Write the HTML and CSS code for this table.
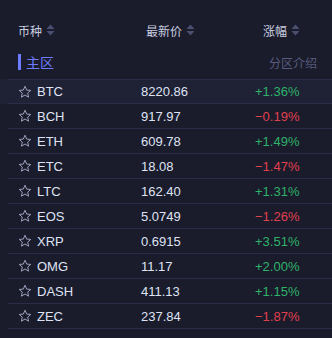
FILE: index.html
```html
<!DOCTYPE html>
<html lang="zh-CN">

<head>
    <meta charset="UTF-8">
    <meta name="viewport" content="width=device-width, initial-scale=1.0">
    <title>行情</title>
    <link rel="stylesheet" href="styles.css">
</head>

<body>
    <div class="market">
        <div class="market-head">
            <div class="col col-name">币种 <svg class="sort" viewBox="0 0 9 12"><path d="M4.5 0.5L8.5 5H0.5Z" /><path d="M4.5 11.5L8.5 7H0.5Z" /></svg></div>
            <div class="col col-price">最新价 <svg class="sort" viewBox="0 0 9 12"><path d="M4.5 0.5L8.5 5H0.5Z" /><path d="M4.5 11.5L8.5 7H0.5Z" /></svg></div>
            <div class="col col-change">涨幅 <svg class="sort" viewBox="0 0 9 12"><path d="M4.5 0.5L8.5 5H0.5Z" /><path d="M4.5 11.5L8.5 7H0.5Z" /></svg></div>
        </div>
        <div class="zone">
            <span class="zone-title">主区</span>
            <a href="javascript:" class="zone-intro">分区介绍</a>
        </div>
        <ul class="list">
            <li class="row active"><div class="row-in"><span class="col col-name"><svg class="star" viewBox="0 0 14 14"><path d="M7 1.2L8.7 5.1L12.8 5.4L9.7 8.1L10.6 12.2L7 10L3.4 12.2L4.3 8.1L1.2 5.4L5.3 5.1Z" /></svg>BTC</span><span class="col col-price">8220.86</span><span class="col col-change up">+1.36%</span></div></li>
            <li class="row"><div class="row-in"><span class="col col-name"><svg class="star" viewBox="0 0 14 14"><path d="M7 1.2L8.7 5.1L12.8 5.4L9.7 8.1L10.6 12.2L7 10L3.4 12.2L4.3 8.1L1.2 5.4L5.3 5.1Z" /></svg>BCH</span><span class="col col-price">917.97</span><span class="col col-change down">&minus;0.19%</span></div></li>
            <li class="row"><div class="row-in"><span class="col col-name"><svg class="star" viewBox="0 0 14 14"><path d="M7 1.2L8.7 5.1L12.8 5.4L9.7 8.1L10.6 12.2L7 10L3.4 12.2L4.3 8.1L1.2 5.4L5.3 5.1Z" /></svg>ETH</span><span class="col col-price">609.78</span><span class="col col-change up">+1.49%</span></div></li>
            <li class="row"><div class="row-in"><span class="col col-name"><svg class="star" viewBox="0 0 14 14"><path d="M7 1.2L8.7 5.1L12.8 5.4L9.7 8.1L10.6 12.2L7 10L3.4 12.2L4.3 8.1L1.2 5.4L5.3 5.1Z" /></svg>ETC</span><span class="col col-price">18.08</span><span class="col col-change down">&minus;1.47%</span></div></li>
            <li class="row"><div class="row-in"><span class="col col-name"><svg class="star" viewBox="0 0 14 14"><path d="M7 1.2L8.7 5.1L12.8 5.4L9.7 8.1L10.6 12.2L7 10L3.4 12.2L4.3 8.1L1.2 5.4L5.3 5.1Z" /></svg>LTC</span><span class="col col-price">162.40</span><span class="col col-change up">+1.31%</span></div></li>
            <li class="row"><div class="row-in"><span class="col col-name"><svg class="star" viewBox="0 0 14 14"><path d="M7 1.2L8.7 5.1L12.8 5.4L9.7 8.1L10.6 12.2L7 10L3.4 12.2L4.3 8.1L1.2 5.4L5.3 5.1Z" /></svg>EOS</span><span class="col col-price">5.0749</span><span class="col col-change down">&minus;1.26%</span></div></li>
            <li class="row"><div class="row-in"><span class="col col-name"><svg class="star" viewBox="0 0 14 14"><path d="M7 1.2L8.7 5.1L12.8 5.4L9.7 8.1L10.6 12.2L7 10L3.4 12.2L4.3 8.1L1.2 5.4L5.3 5.1Z" /></svg>XRP</span><span class="col col-price">0.6915</span><span class="col col-change up">+3.51%</span></div></li>
            <li class="row"><div class="row-in"><span class="col col-name"><svg class="star" viewBox="0 0 14 14"><path d="M7 1.2L8.7 5.1L12.8 5.4L9.7 8.1L10.6 12.2L7 10L3.4 12.2L4.3 8.1L1.2 5.4L5.3 5.1Z" /></svg>OMG</span><span class="col col-price">11.17</span><span class="col col-change up">+2.00%</span></div></li>
            <li class="row"><div class="row-in"><span class="col col-name"><svg class="star" viewBox="0 0 14 14"><path d="M7 1.2L8.7 5.1L12.8 5.4L9.7 8.1L10.6 12.2L7 10L3.4 12.2L4.3 8.1L1.2 5.4L5.3 5.1Z" /></svg>DASH</span><span class="col col-price">411.13</span><span class="col col-change up">+1.15%</span></div></li>
            <li class="row"><div class="row-in"><span class="col col-name"><svg class="star" viewBox="0 0 14 14"><path d="M7 1.2L8.7 5.1L12.8 5.4L9.7 8.1L10.6 12.2L7 10L3.4 12.2L4.3 8.1L1.2 5.4L5.3 5.1Z" /></svg>ZEC</span><span class="col col-price">237.84</span><span class="col col-change down">&minus;1.87%</span></div></li>
        </ul>
    </div>
</body>

</html>
```

FILE: styles.css
```css
html,
body {
    margin: 0;
    padding: 0;
    height: 100%;
    background-color: #1a1b2b;
}

.market {
    width: 332px;
    font-family: "Liberation Sans", "Noto Sans CJK SC", sans-serif;
    color: #dfe3f4;
}

.market-head {
    display: grid;
    grid-template-columns: 141px 114px 1fr;
    height: 30px;
    padding-top: 15px;
    font-size: 12px;
    color: #c9cde0;
}

.market-head .col {
    display: flex;
    align-items: center;
    height: 30px;
}

.market-head .col-name {
    padding-left: 18px;
}

.market-head .col-price {
    padding-left: 5px;
}

.market-head .col-change {
    padding-left: 8px;
}

.sort {
    width: 9px;
    height: 12px;
    margin-left: 4px;
    fill: #4a4f72;
}

.zone {
    display: flex;
    align-items: center;
    justify-content: space-between;
    height: 34px;
    padding: 0 15px 0 18px;
}

.zone-title {
    display: flex;
    align-items: center;
    font-size: 14px;
    color: #6d7cff;
}

.zone-title::before {
    content: "";
    width: 3px;
    height: 16px;
    margin-right: 5px;
    background-color: #6d7cff;
}

.zone-intro {
    font-size: 12px;
    color: #575c7e;
    text-decoration: none;
}

.list {
    margin: 0;
    padding: 0;
    list-style: none;
}

.row {
    padding-left: 8px;
}

.row.active {
    background-color: #1f2135;
}

.row-in {
    display: grid;
    grid-template-columns: 133px 114px 1fr;
    height: 24px;
    align-items: center;
    border-bottom: 1px solid #2a2d47;
    font-size: 13px;
}

.list .row:first-child .row-in {
    height: 23px;
    border-top: 1px solid #2a2d47;
}

.row .col-name {
    display: flex;
    align-items: center;
    padding-left: 10px;
}

.star {
    width: 14px;
    height: 14px;
    margin-right: 5px;
    fill: none;
    stroke: #9ba0bb;
    stroke-width: 1;
    stroke-linejoin: round;
}

.up {
    color: #2eb36a;
}

.down {
    color: #e0404e;
}
```
